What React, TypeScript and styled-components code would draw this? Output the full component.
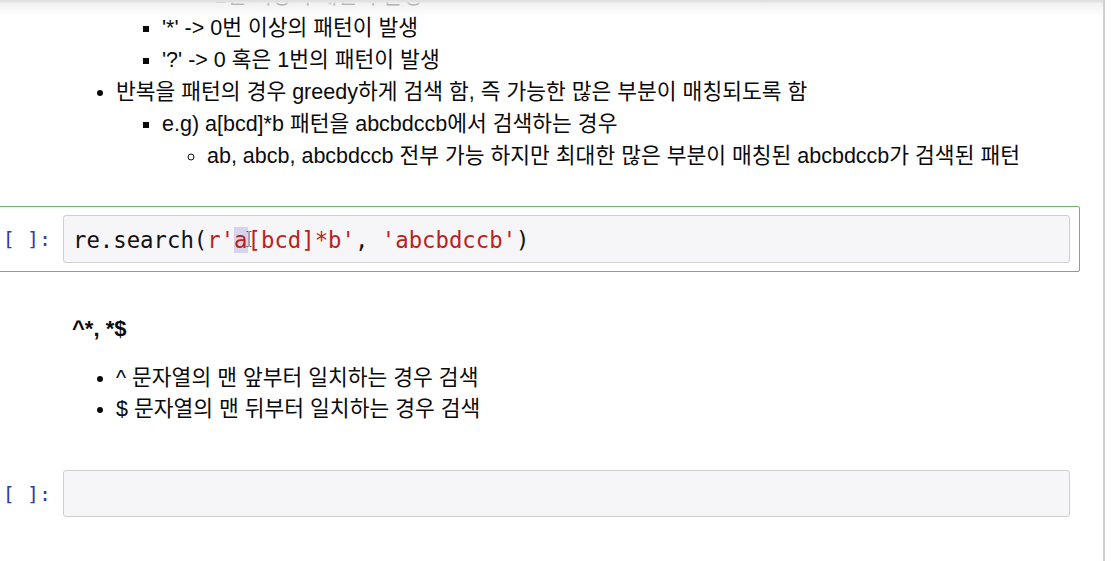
import styled, { createGlobalStyle } from "styled-components";

const GlobalStyle = createGlobalStyle`
  html, body {
    margin: 0;
    padding: 0;
    background: #ffffff;
    overflow: hidden;
  }
`;

const TEXT_FONT = `"Liberation Sans", "Noto Sans CJK KR", sans-serif`;
const CODE_FONT = `"DejaVu Sans Mono", "Liberation Mono", monospace`;

const Page = styled.div`
  position: relative;
  width: 1111px;
  height: 561px;
  overflow: hidden;
  background: #fff;
`;

const TopShade = styled.div`
  position: absolute;
  top: 0;
  left: 0;
  width: 1103px;
  height: 16px;
  z-index: 2;
  background: linear-gradient(
    to bottom,
    #dedede 0px,
    #e4e4e4 2px,
    rgba(238, 238, 240, 0.85) 3px,
    rgba(255, 255, 255, 0) 16px
  );
`;

const Notebook = styled.div`
  width: 1105px;
  height: 100%;
  box-sizing: border-box;
  border-right: 2px solid #d2d2d2;
  display: flex;
  flex-direction: column;
`;

const Cell = styled.div<{ $selected?: boolean; $top: number }>`
  display: flex;
  align-items: center;
  width: 1083px;
  margin: ${(p) => p.$top}px 0 0 -3px;
  padding: 8px 9px 8px 0;
  box-sizing: border-box;
  border: 1px solid ${(p) => (p.$selected ? "#6cb56f" : "transparent")};
  border-radius: 2px;
`;

const TextCell = styled.div<{ $top: number }>`
  display: flex;
  margin: ${(p) => p.$top}px 0 0 -2px;
`;

const Prompt = styled.div`
  flex: 0 0 65px;
  box-sizing: border-box;
  padding-right: 12px;
  text-align: right;
  font-family: ${CODE_FONT};
  font-size: 20px;
  color: #303f9f;
  white-space: pre;
`;

const InputArea = styled.div<{ $height: number }>`
  flex: 1;
  height: ${(p) => p.$height}px;
  box-sizing: border-box;
  display: flex;
  align-items: center;
  padding: 2px 9px 0;
  background: #f6f5f8;
  border: 1px solid #cfcfcf;
  border-radius: 3px;
  font-family: ${CODE_FONT};
  font-size: 22.3px;
  color: #111;
  white-space: pre;
`;

const Str = styled.span`
  color: #ba2121;
`;

const Selected = styled.span`
  position: relative;
  background: #d6d3ef;
`;

const Cursor = styled.svg`
  position: absolute;
  left: 12px;
  top: 4px;
`;

const Rendered = styled.div`
  flex: 1;
  padding-left: 9px;
  font-family: ${TEXT_FONT};
  font-size: 21.5px;
  color: #0a0a0a;
`;

const List = styled.ul<{ $marker: string; $indent: number; $line?: number }>`
  margin: 0;
  padding-left: ${(p) => p.$indent}px;
  list-style-type: ${(p) => p.$marker};
  line-height: ${(p) => p.$line ?? 32}px;
`;

const Heading = styled.div`
  font-weight: bold;
  font-size: 22px;
  line-height: 32px;
  margin-bottom: 18px;
`;

export default function App() {
  return (
    <Page>
      <GlobalStyle />
      <TopShade />
      <Notebook>
        <TextCell $top={-52}>
          <Prompt />
          <Rendered>
            <List $marker="disc" $indent={44}>
              <li>
                반복 패턴
                <List $marker="square" $indent={46}>
                  <li>'+' -&gt; 1번 이상의 패턴이 발생</li>
                  <li>'*' -&gt; 0번 이상의 패턴이 발생</li>
                  <li>'?' -&gt; 0 혹은 1번의 패턴이 발생</li>
                </List>
              </li>
              <li>
                반복을 패턴의 경우 greedy하게 검색 함, 즉 가능한 많은 부분이 매칭되도록 함
                <List $marker="square" $indent={46}>
                  <li>
                    e.g) a[bcd]*b 패턴을 abcbdccb에서 검색하는 경우
                    <List $marker="circle" $indent={45}>
                      <li>
                        ab, abcb, abcbdccb 전부 가능 하지만 최대한 많은 부분이 매칭된
                        abcbdccb가 검색된 패턴
                      </li>
                    </List>
                  </li>
                </List>
              </li>
            </List>
          </Rendered>
        </TextCell>

        <Cell $selected $top={34}>
          <Prompt>[ ]:</Prompt>
          <InputArea $height={48}>
            re.search(<Str>r'</Str>
            <Selected>
              <Str>a</Str>
              <Cursor width="6" height="16" viewBox="0 0 6 16">
                <path
                  d="M0.5 0.5h2M3.5 0.5h2M3 1v14M0.5 15.5h2M3.5 15.5h2"
                  stroke="#555"
                  strokeWidth="1"
                  fill="none"
                />
              </Cursor>
            </Selected>
            <Str>[bcd]*b'</Str>, <Str>'abcbdccb'</Str>)
          </InputArea>
        </Cell>

        <TextCell $top={41}>
          <Prompt />
          <Rendered>
            <Heading>^*, *$</Heading>
            <List $marker="disc" $indent={44} $line={31}>
              <li>^ 문자열의 맨 앞부터 일치하는 경우 검색</li>
              <li>$ 문자열의 맨 뒤부터 일치하는 경우 검색</li>
            </List>
          </Rendered>
        </TextCell>

        <Cell $top={36}>
          <Prompt>[ ]:</Prompt>
          <InputArea $height={47} />
        </Cell>
      </Notebook>
    </Page>
  );
}
